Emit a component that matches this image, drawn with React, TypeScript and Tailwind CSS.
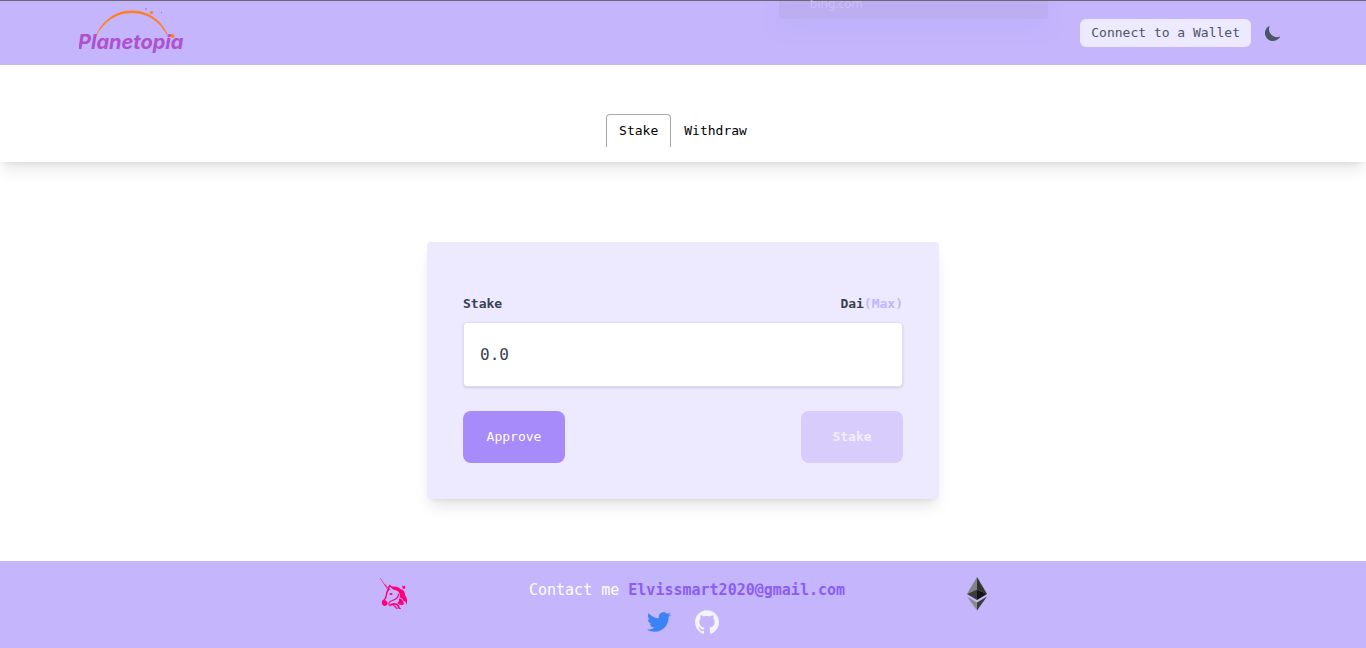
import { useState } from "react";
import { FaTwitter } from "react-icons/fa";
import { HiMoon } from "react-icons/hi";
import { SiGithub } from "react-icons/si";

const actionBtn =
  "h-[52px] w-[102px] rounded-lg bg-[#a78bfa] text-[13px] text-white disabled:opacity-30";

function Logo() {
  return (
    <svg viewBox="0 0 112 50" className="h-[50px] w-28" role="img" aria-label="Planetopia">
      <path
        d="M15.500 32C20 15 35 2.500 52.500 2.500C73 2.500 87 16 92 36C85 17 72 5 52.500 5C36 5 22 16 15.500 32Z"
        fill="#ff7f1e"
      />
      <circle cx="72.500" cy="4.500" r="1.600" fill="#ff7f1e" />
      <circle cx="93.500" cy="28" r="2" fill="#ff7f1e" />
      <circle cx="67" cy="1" r="0.900" fill="#b07be6" />
      <circle cx="82.500" cy="4.500" r="0.700" fill="#9b6fe0" />
      <text
        x="-1"
        y="41"
        fill="#b04fd0"
        className="font-['Inter',sans-serif] text-[20px] font-bold italic"
      >
        Planetopia
      </text>
    </svg>
  );
}

function Unicorn() {
  return (
    <svg viewBox="0 0 28 32" className="h-8 w-7" aria-hidden="true">
      <g fill="none" stroke="#ff007a" strokeLinecap="round" strokeLinejoin="round">
        <path d="M0.500 1.500L8 13" strokeWidth="0.800" opacity="0.800" />
        <path d="M5 7.500L10 13" strokeWidth="0.900" />
        <path d="M8 13C6 16 7 18.500 5.500 21C4.500 23 3 23.500 3 26" strokeWidth="1.500" />
        <path d="M8.500 13C8 11 9 9.500 9.800 8.500C10.500 9.500 11.500 10 13 10.500" strokeWidth="1.400" />
        <path d="M18.500 17C18.500 20.500 15 23 11 24C9 25 8.500 26.500 9 27.500" strokeWidth="1.200" />
        <path d="M10 28.500C12 26.500 16 26 18 28.500C19 30 18 31 20 31.500" strokeWidth="1.700" />
        <path d="M13.500 28.500C15.500 29 15 30.500 17 31.500" strokeWidth="1.200" />
      </g>
      <g fill="#ff007a">
        <path d="M11 10.500C14.500 8.800 18 9.500 20.500 12C23.500 12.500 25 14.500 25 18C27 20.500 27.800 24 26.500 28C26 25 25 23.500 23.500 24C23 22 21 20.500 19.500 20.500C20.500 18 19.500 14.500 16.500 13.500C14.500 12.500 12 12.500 11 10.500Z" />
        <path d="M22.500 8C22 10 22.500 11.300 23.500 12C25 12 26 11 24.800 8.500C24.200 9.600 23.300 9.600 22.500 8Z" />
        <path d="M19 21.500C21.500 21 23.500 23.500 24 27.500C22.500 28.500 19 28 17 26C18 25.500 19.500 24.500 19 21.500Z" />
        <path d="M2.800 23C5.500 22.500 8 24.500 7.500 27C6.500 29.500 3.800 29.500 2.500 27.800C1.500 26.500 1.500 24 2.800 23Z" />
        <ellipse cx="11" cy="17" rx="1.600" ry="0.900" />
      </g>
    </svg>
  );
}

function Ethereum() {
  return (
    <svg viewBox="0 0 22 34" className="h-[34px] w-[22px]" aria-hidden="true">
      <path d="M11 0L1 17L11 12.500Z" fill="#828384" />
      <path d="M11 0L21 17L11 12.500Z" fill="#343434" />
      <path d="M1 17L11 12.500V23Z" fill="#3c3c3b" />
      <path d="M21 17L11 12.500V23Z" fill="#141414" />
      <path d="M1 19.500L11 25.500V33.500Z" fill="#8c8c8c" />
      <path d="M21 19.500L11 25.500V33.500Z" fill="#3c3c3b" />
    </svg>
  );
}

export default function App() {
  const [tab, setTab] = useState("Stake");
  const [amount, setAmount] = useState("0.0");

  return (
    <div className="flex min-h-screen flex-col bg-white font-['DejaVu_Sans_Mono',monospace] text-[13px]">
      <header className="relative flex h-[65px] items-center justify-between border-t border-[#6b6673] bg-[#c4b5fd] pr-[83px] pl-[79px]">
        <Logo />
        <div className="flex items-center gap-3">
          <button className="h-7 rounded-md bg-[#ede9fe] px-[11px] text-[#4b5563]">
            Connect to a Wallet
          </button>
          <button aria-label="Toggle dark mode" className="text-[#4b5563]">
            <HiMoon className="h-5 w-5" />
          </button>
        </div>
        <div className="absolute top-0 left-[779px] h-[18px] w-[269px] rounded-b bg-[#bcaef1] px-[31px] shadow-[0_8px_20px_rgba(150,150,230,0.15)]">
          <span className="-mt-1 block font-['Noto_Sans',sans-serif] text-[12px] leading-[14px] text-[#cabff8]">
            bing.com
          </span>
        </div>
      </header>

      <nav className="flex justify-center pt-[49px] pb-[15px] shadow-lg">
        {["Stake", "Withdraw"].map((name) => (
          <button
            key={name}
            onClick={() => setTab(name)}
            className={`h-[33px] rounded-t border border-b-0 px-3 text-black ${
              tab === name ? "border-[#a8a8a8]" : "border-transparent"
            }`}
          >
            {name}
          </button>
        ))}
      </nav>

      <main className="flex flex-1 flex-col items-center px-4 pt-20 pb-[62px]">
        <form
          onSubmit={(e) => e.preventDefault()}
          className="w-full max-w-lg rounded bg-[#ede9fe] px-9 pt-[52px] pb-9 shadow-lg"
        >
          <div className="mb-2 flex items-center justify-between leading-5 font-bold text-[#374151]">
            <label htmlFor="amount">Stake</label>
            <span>
              Dai
              <button type="button" className="text-[#c4b5fd]">
                (Max)
              </button>
            </span>
          </div>
          <input
            id="amount"
            value={amount}
            onChange={(e) => setAmount(e.target.value)}
            className="mb-6 block h-[65px] w-full rounded border border-[#e0dcf2] bg-white px-4 text-[16px] text-[#374151] shadow-sm outline-none"
          />
          <div className="flex justify-between">
            <button type="button" className={actionBtn}>
              Approve
            </button>
            <button type="submit" disabled className={`${actionBtn} font-bold`}>
              Stake
            </button>
          </div>
        </form>
      </main>

      <footer className="flex h-[87px] justify-center bg-[#c4b5fd] pt-4 pl-0.5">
        <div className="flex w-[608px] max-w-full items-start justify-between">
          <Unicorn />
          <div className="flex flex-col items-center gap-2 pt-px">
            <p className="text-[15px] leading-6 text-white">
              Contact me{" "}
              <a href="mailto:Elvissmart2020@gmail.com" className="font-bold text-[#8b5cf6]">
                Elvissmart2020@gmail.com
              </a>
            </p>
            <div className="flex gap-6 pr-2">
              <a href="#twitter" aria-label="Twitter" className="text-[#3b82f6]">
                <FaTwitter className="h-6 w-6" />
              </a>
              <a href="#github" aria-label="GitHub" className="text-[#f3f4f6]">
                <SiGithub className="h-6 w-6" />
              </a>
            </div>
          </div>
          <Ethereum />
        </div>
      </footer>
    </div>
  );
}
